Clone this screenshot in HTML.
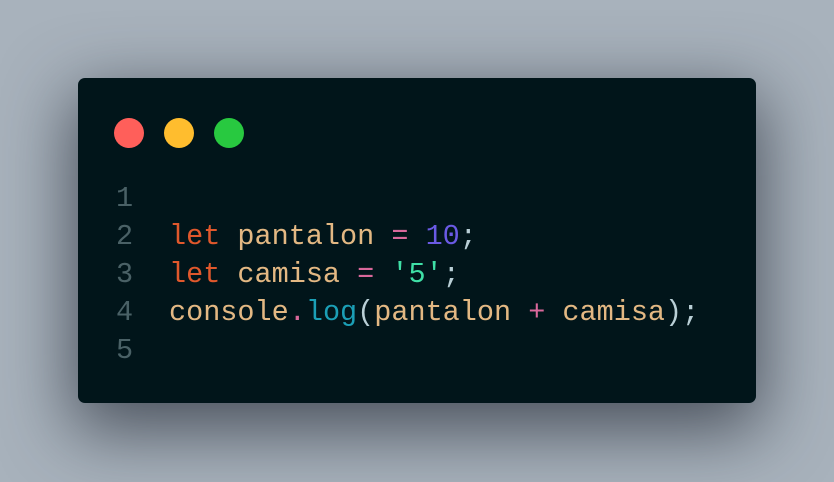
<!DOCTYPE html>
<html><head><meta charset="utf-8"><style>
html,body{margin:0;padding:0;}
body{width:834px;height:482px;background:#a8b2bc;position:relative;overflow:hidden;}
.card{position:absolute;left:78px;top:78px;width:678px;height:325px;background:#01151a;border-radius:7px;
box-shadow:0 22px 70px 6px rgba(35,42,52,0.7);}
.dot{position:absolute;top:40px;width:30px;height:30px;border-radius:50%;}
.code{position:absolute;left:0;top:102px;font-family:"Liberation Mono",monospace;font-size:28.5px;line-height:38px;white-space:pre;}
.ln{position:absolute;left:38px;color:#4a6166;}
.src{position:absolute;left:91px;}
.k{color:#e0582c}.v{color:#e3b883}.o{color:#d9689b}.n{color:#6a5ae4}.s{color:#3fdfa6}.f{color:#1b9fb6}.p{color:#b9cfd6}
</style></head><body>
<div class="card">
<div class="dot" style="left:36px;background:#ff5f5a"></div>
<div class="dot" style="left:86px;background:#ffbd2e"></div>
<div class="dot" style="left:136px;background:#28c940"></div>
<div class="code"><div class="ln">1
2
3
4
5</div><div class="src">
<span class="k">let</span> <span class="v">pantalon</span> <span class="o">=</span> <span class="n">10</span><span class="p">;</span>
<span class="k">let</span> <span class="v">camisa</span> <span class="o">=</span> <span class="s">'5'</span><span class="p">;</span>
<span class="v">console</span><span class="o">.</span><span class="f">log</span><span class="p">(</span><span class="v">pantalon</span> <span class="o">+</span> <span class="v">camisa</span><span class="p">);</span>
</div></div>
</div>
</body></html>
